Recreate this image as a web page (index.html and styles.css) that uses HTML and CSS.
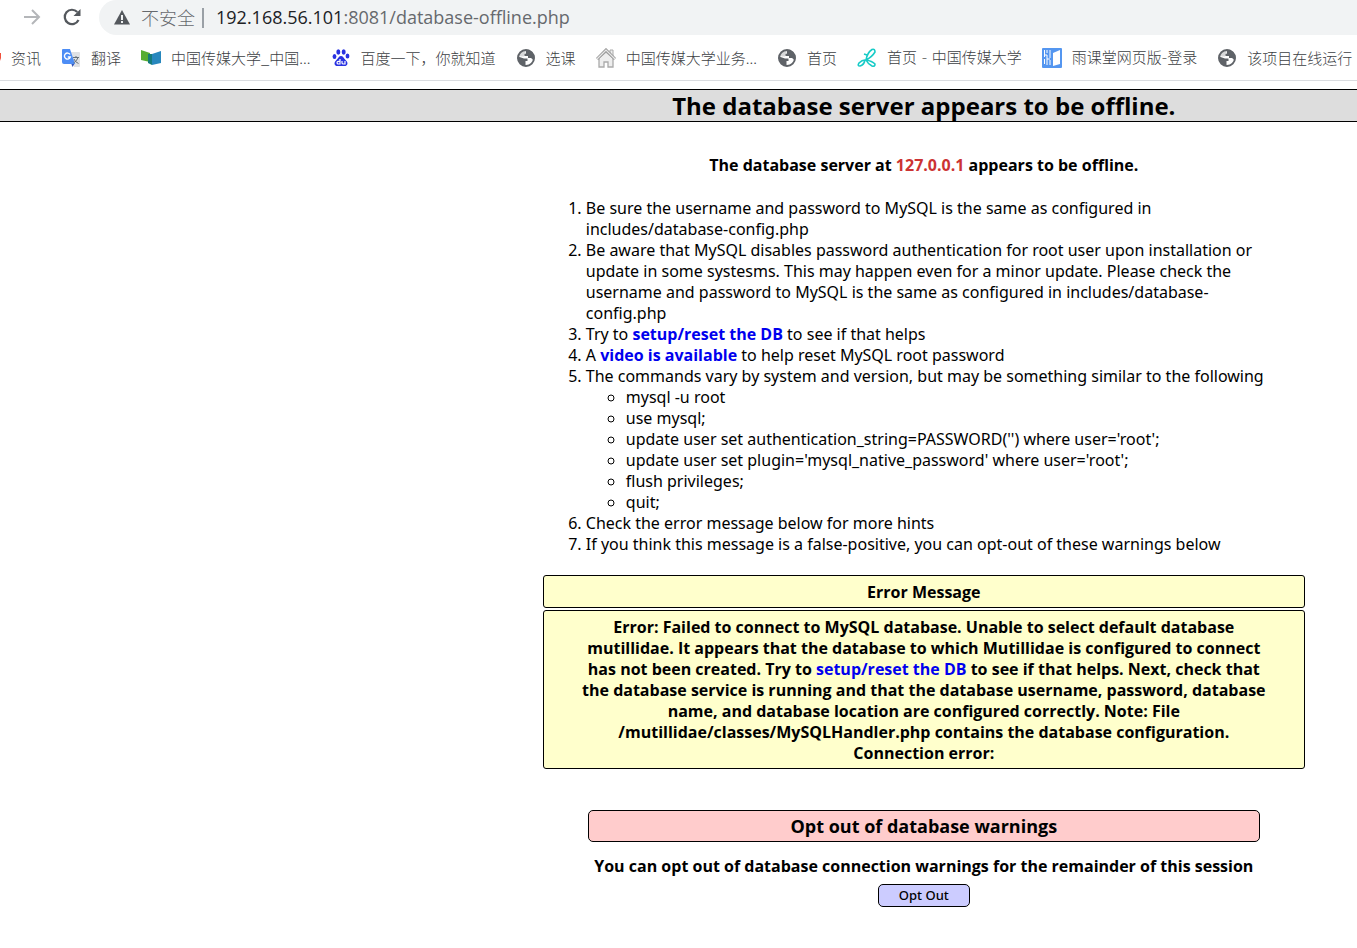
FILE: index.html
```html
<!DOCTYPE html>
<html lang="zh-CN">
<head>
<meta charset="utf-8">
<title>The database server appears to be offline.</title>
<link rel="stylesheet" href="styles.css">
</head>
<body>
<svg class="defs" aria-hidden="true">
  <symbol id="globe" viewBox="0 0 20 20">
    <circle cx="10" cy="10" r="8" fill="none" stroke="#5f6368" stroke-width="2"/>
    <path d="M10 2.500V5Q10 6 8.500 6V8H12V10H15L17.500 12 18.500 8 16 4 12 1.500ZM2 8.500 8 10.500H11.500V13H9.500V17.500L5 16.500 2 12Z" fill="#5f6368"/>
    <path d="M8 1.500Q4 2 2 7L5 8.500H8L10 3Z" fill="#5f6368" opacity=".25"/>
  </symbol>
</svg>
<header class="browser">
  <div class="toolbar">
    <button class="tool" type="button" aria-label="Forward"><svg width="20" height="20" viewBox="0 0 20 20" fill="none" stroke="#b4b6b9" stroke-width="2"><path d="M2 9H17M10 2l7 7-7 7"/></svg></button>
    <button class="tool" type="button" aria-label="Reload"><svg width="20" height="20" viewBox="0 0 20 20"><path d="M16.500 12A7.200 7.200 0 1 1 15.300 4.100" fill="none" stroke="#54585d" stroke-width="2.200"/><path d="M18.500 1v7H11.500Z" fill="#54585d"/></svg></button>
    <div class="omnibox">
      <svg class="warn" width="16" height="15" viewBox="0 0 16 15"><path d="M8 0 16 14.500H0Z" fill="#54585d"/><path d="M7 5h2v5H7zM7 11h2v2H7z" fill="#f1f3f4"/></svg>
      <span class="insecure">不安全</span>
      <span class="divider"></span>
      <span class="url"><span class="host">192.168.56.101</span>:8081/database-offline.php</span>
    </div>
  </div>
  <nav class="bookmarks">
    <a class="bookmark" href="#"><svg width="1" height="20" viewBox="0 0 1 20"><path d="M0 5H1V10L0 13Z" fill="#f0503c"/></svg>资讯</a>
    <a class="bookmark" href="#"><svg width="20" height="20" viewBox="0 0 20 20"><path d="M8 4H18Q19 4 19 5V18Q19 19 18 19H13Z" fill="#dfe1e4"/><path d="M10 15H14L11.500 19Z" fill="#3858b8"/><path d="M2 1H9L14 16H3Q1 16 1 14V2Q1 1 2 1Z" fill="#4d8df5"/><path d="M9 6.500A3 3 0 1 0 9.300 9H6.800" fill="none" stroke="#fff" stroke-width="1.400"/><path d="M12 9.500H18M15 8V9.500M17 9.500Q16 13 12.500 15M13 11Q14 14 17.500 15.500" fill="none" stroke="#657078"/></svg>翻译</a>
    <a class="bookmark" href="#"><svg width="20" height="20" viewBox="0 0 20 20"><path d="M0 2 9 5V14L0 12Z" fill="#56ad32"/><path d="M11 6 20 3V15L11 17Z" fill="#2787bd"/><path d="M7 6 11 6V17L7 15Z" fill="#147b7b"/></svg>中国传媒大学_中国...</a>
    <a class="bookmark" href="#"><svg width="20" height="20" viewBox="0 0 20 20"><g fill="#2932e1"><ellipse cx="7.300" cy="4" rx="2" ry="2.700"/><ellipse cx="12.700" cy="4" rx="2" ry="2.700"/><ellipse cx="3.500" cy="8.500" rx="1.900" ry="2.500"/><ellipse cx="16.500" cy="8" rx="1.900" ry="2.500"/><path d="M10 8C12 8 12.500 10 15 12.500 18 15.500 16 18.500 13 18H7C4 18.500 2 15.500 5 12.500 7.500 10 8 8 10 8Z"/></g><path d="M9 11V16H7.500Q6 16 6 14.700T7.500 13.300H9M11 13V15Q11 16 12.500 16H14V13" fill="none" stroke="#fff" stroke-width="1.200"/></svg>百度一下，你就知道</a>
    <a class="bookmark" href="#"><svg width="20" height="20"><use href="#globe"/></svg>选课</a>
    <a class="bookmark" href="#"><svg width="20" height="20" viewBox="0 0 20 20"><path d="M3 10V19H8V14H12V19H17V10L10 4Z" fill="#eee" stroke="#aaa" stroke-width="1.300"/><path d="M14 5V2H17V8" fill="#eee" stroke="#aaa"/><path d="M1 11 10 2 19 11" fill="none" stroke="#999" stroke-width="3"/><path d="M1 11 10 2 19 11" fill="none" stroke="#e8e8e8" stroke-width="1.200"/></svg>中国传媒大学业务...</a>
    <a class="bookmark" href="#"><svg width="20" height="20"><use href="#globe"/></svg>首页</a>
    <a class="bookmark hyphenated" href="#"><svg width="20" height="20" viewBox="0 0 20 20" fill="none" stroke="#17cbc7" stroke-width="1.600" stroke-linejoin="round"><path d="M9 12Q10 5 15 1.500 18 .5 18 4 15 9 9 12ZM8 12Q7 17 3 18 0 18 2 15 5 12 8 12ZM9 12Q15 13 18 16 18 19 15 18 11 16 9 12ZM7 6 10 7"/></svg>首页 - 中国传媒大学</a>
    <a class="bookmark hyphenated" href="#"><svg width="20" height="20" viewBox="0 0 20 20"><rect width="20" height="20" rx="1" fill="#5496f0"/><path d="M11 5 18 2V16L11 18Z" fill="#fff"/><path d="M2.500 2V9M2.500 11V16M5 2V5M5 7V17M8 2V10M8 12V17M2.500 7H5M5 11H8" stroke="#fff" fill="none"/></svg>雨课堂网页版-登录</a>
    <a class="bookmark" href="#"><svg width="20" height="20"><use href="#globe"/></svg>该项目在线运行</a>
  </nav>
</header>
<div class="banner"><h1 class="column">The database server appears to be offline.</h1></div>
<main class="column">
  <p class="lead">The database server at <span class="ip">127.0.0.1</span> appears to be offline.</p>
  <ol class="hints">
    <li>Be sure the username and password to MySQL is the same as configured in<br>includes/database-config.php</li>
    <li>Be aware that MySQL disables password authentication for root user upon installation or<br>update in some systesms. This may happen even for a minor update. Please check the<br>username and password to MySQL is the same as configured in includes/database-<br>config.php</li>
    <li>Try to <a href="#">setup/reset the DB</a> to see if that helps</li>
    <li>A <a href="#">video is available</a> to help reset MySQL root password</li>
    <li>The commands vary by system and version, but may be something similar to the following
      <ul>
        <li>mysql -u root</li>
        <li>use mysql;</li>
        <li>update user set authentication_string=PASSWORD('') where user='root';</li>
        <li>update user set plugin='mysql_native_password' where user='root';</li>
        <li>flush privileges;</li>
        <li>quit;</li>
      </ul>
    </li>
    <li>Check the error message below for more hints</li>
    <li>If you think this message is a false-positive, you can opt-out of these warnings below</li>
  </ol>
  <table class="errors">
    <thead><tr><th>Error Message</th></tr></thead>
    <tbody><tr><td>Error: Failed to connect to MySQL database. Unable to select default database<br>mutillidae. It appears that the database to which Mutillidae is configured to connect<br>has not been created. Try to <a href="#">setup/reset the DB</a> to see if that helps. Next, check that<br>the database service is running and that the database username, password, database<br>name, and database location are configured correctly. Note: File<br>/mutillidae/classes/MySQLHandler.php contains the database configuration.<br>Connection error:</td></tr></tbody>
  </table>
  <form class="optout">
    <h2>Opt out of database warnings</h2>
    <p>You can opt out of database connection warnings for the remainder of this session</p>
    <button type="button">Opt Out</button>
  </form>
</main>
</body>
</html>
```
FILE: styles.css
```css
* { box-sizing: border-box; }
body {
  margin: 0;
  overflow-x: hidden;
  background: #fff;
  color: #000;
  font: 16px/21px "Noto Sans", "Noto Sans CJK SC", sans-serif;
}
.defs { position: absolute; width: 0; height: 0; }
svg { display: block; flex: none; }
a { color: #00e; font-weight: 700; font-family: "Open Sans", sans-serif; text-decoration: none; }

.browser { border-bottom: 1px solid #dadce0; }
.toolbar { display: flex; height: 35px; }
.tool {
  display: flex;
  width: 40px;
  padding: 0 10px;
  border: 0;
  background: none;
  align-items: center;
}
.tool:first-child { margin-left: 12px; }
.omnibox {
  display: flex;
  flex: 1;
  align-items: center;
  margin-left: 7px;
  padding-left: 15px;
  border-radius: 18px 0 0 18px;
  background: #f1f3f4;
  color: #66696d;
  font-family: "Open Sans", sans-serif;
  font-size: 18px;
  white-space: nowrap;
}
.insecure { margin-left: 11px; font-family: "Noto Sans CJK SC", sans-serif; font-weight: 300; }
.divider { width: 2px; height: 20px; margin: 0 12px 0 7px; background: #9aa0a6; }
.host { color: #202124; }
.bookmarks {
  display: flex;
  gap: 20px;
  height: 45px;
  align-items: center;
  overflow: hidden;
}
.bookmark {
  display: flex;
  flex: none;
  gap: 10px;
  align-items: center;
  color: #3c4043;
  font: 300 15px/20px "Noto Sans CJK SC", sans-serif;
  white-space: nowrap;
}
.hyphenated { font-family: "DejaVu Sans", "Noto Sans CJK SC", sans-serif; }

.banner {
  margin: 8px 0 33px;
  border: solid #000;
  border-width: 1px 0;
  background: #ddd;
}
.column { max-width: 762px; margin: 0 0 0 40%; text-align: center; }
h1, h2, .lead, .errors, .optout { font-family: "Open Sans", sans-serif; font-weight: 700; }
h1 { font-size: 24px; line-height: 31px; white-space: nowrap; }
.lead { margin: 0 0 22px; }
.ip { color: #c33; }
.hints { margin: 0 0 20px; padding-left: 43px; text-align: left; white-space: nowrap; }
.hints ul { padding-left: 40px; }
.errors { width: 100%; border-spacing: 0 2px; margin: -2px 0 39px; white-space: nowrap; }
.errors th, .errors td {
  padding: 6px 5px 4px;
  border: 1px solid #000;
  border-radius: 3px;
  background: #ffc;
  text-align: center;
}
.optout { display: flex; flex-direction: column; align-items: center; margin: 0 45px; }
.optout h2 {
  align-self: stretch;
  margin: 0 0 14px;
  border: 1px solid #000;
  border-radius: 5px;
  background: #fcc;
  font-size: 18px;
  line-height: 30px;
}
.optout p { margin: 0 0 7px; white-space: nowrap; }
.optout button {
  padding: 0 20px;
  border: 1px solid #000;
  border-radius: 5px;
  background: #ccf;
  color: #000;
  font: 500 13px/21px "Noto Sans", sans-serif;
}
```
